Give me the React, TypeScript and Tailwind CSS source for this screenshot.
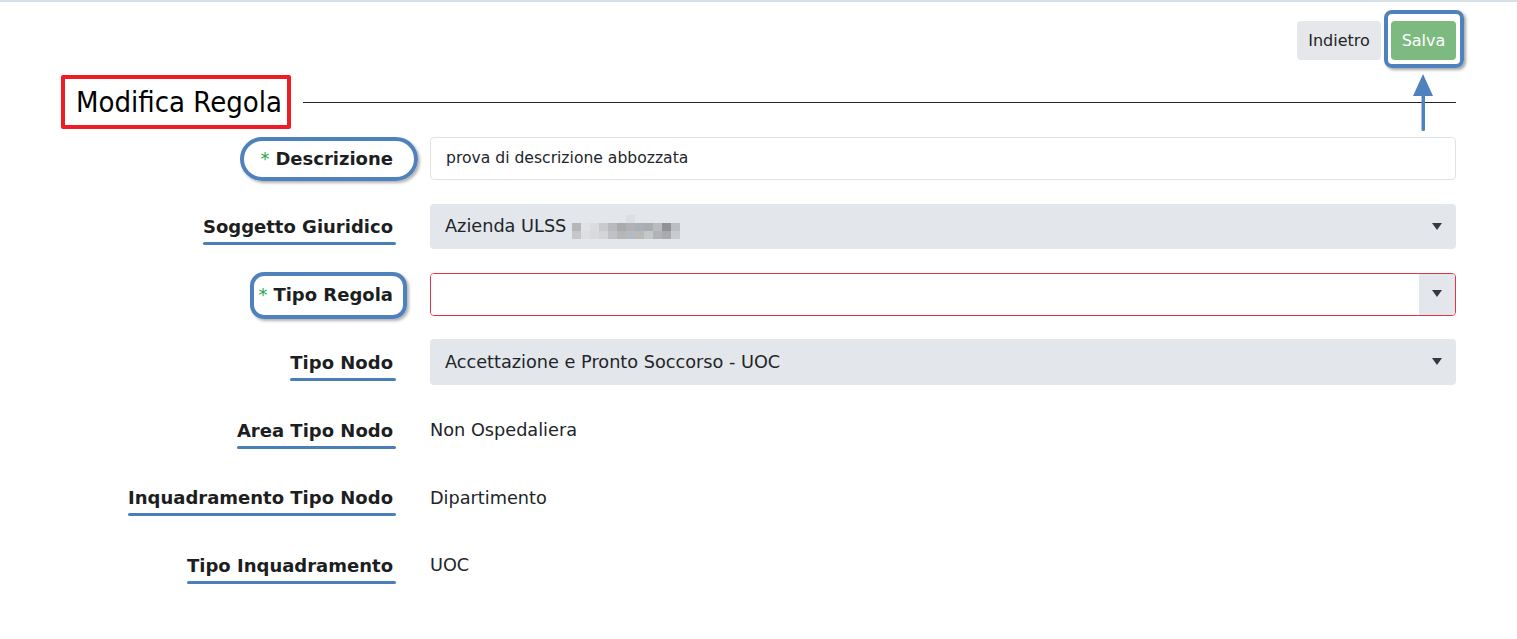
import React from "react";

const FONT = { fontFamily: '"DejaVu Sans", sans-serif' };
const TITLE_FONT = { fontFamily: '"DejaVu Sans Condensed", "DejaVu Sans", sans-serif' };

const blurCells = [
  ["bg-[#e4e6ea]", "bg-[#e4e6ea]", "bg-[#e4e6ea]", "bg-[#e4e6ea]", "bg-[#e4e6ea]", "bg-[#e4e6ea]", "bg-[#dcdee2]", "bg-[#e4e6ea]", "bg-[#e4e6ea]", "bg-[#e4e6ea]", "bg-[#e4e6ea]", "bg-[#e4e6ea]"],
  ["bg-[#b4b6ba]", "bg-[#e0e2e6]", "bg-[#dadce0]", "bg-[#c8cace]", "bg-[#b8babe]", "bg-[#a8aaae]", "bg-[#b0b2b6]", "bg-[#a9b0b9]", "bg-[#aaacb0]", "bg-[#b9bbbf]", "bg-[#8f9298]", "bg-[#bcbec2]"],
  ["bg-[#c4c6ca]", "bg-[#dcdee2]", "bg-[#d8dade]", "bg-[#d2d4d8]", "bg-[#bfc1c4]", "bg-[#b8b6b4]", "bg-[#b4bac2]", "bg-[#b8bab6]", "bg-[#c6c8c8]", "bg-[#b0b2b8]", "bg-[#a8aab0]", "bg-[#c8cace]"],
];

function Caret() {
  return (
    <svg width="10" height="8" viewBox="0 0 10 8" className="shrink-0">
      <path d="M0 0 L10 0 L5 7 Z" fill="#343a40" />
    </svg>
  );
}

function Underlined({ children }: { children: React.ReactNode }) {
  return (
    <span className="relative inline-block">
      {children}
      <span className="absolute left-[0px] right-[-3px] bottom-[-5px] h-[3px] rounded-full bg-[#4a7ebb]" />
    </span>
  );
}

function Req() {
  return <span className="text-[#28a745] font-normal mr-[6px]">*</span>;
}

function Row({ label, children }: { label: React.ReactNode; children: React.ReactNode }) {
  return (
    <div className="grid grid-cols-[332px_1fr] gap-[37px] items-center h-[67.8px]">
      <div className="text-right font-bold text-[18px] text-[#1c1e21]">{label}</div>
      <div>{children}</div>
    </div>
  );
}

export default function App() {
  return (
    <div className="min-h-[639px] bg-white border-t-2 border-[#d6e0e8]" style={FONT}>
      <div className="pl-[61px] pr-[61px]">
        <div className="flex justify-end items-start gap-[10px] pt-[19px]">
          <button className="h-[39px] w-[84px] rounded-[4px] bg-[#e5e7eb] text-[16px] text-[#212529]">Indietro</button>
          <div className="relative">
            <button className="h-[39px] w-[65px] rounded-[4px] bg-[#7dba7f] text-[16px] text-white">Salva</button>
            <span className="pointer-events-none absolute left-[-7px] right-[-8px] top-[-11px] bottom-[-8px] rounded-[8px] border-[4px] border-[#4f81bd] shadow-[2px_2px_3px_rgba(0,0,0,0.35)]" />
            <svg className="absolute left-[21px] top-[53px]" width="22" height="57" viewBox="0 0 22 57">
              <path d="M11 0 L21 22 L1 22 Z" fill="#4f81bd" />
              <rect x="9.5" y="20" width="3.5" height="37" rx="1.5" fill="#4f81bd" />
            </svg>
          </div>
        </div>

        <div className="flex items-center mt-[15px]">
          <div className="border-[4px] border-[#ee1c25] rounded-[2px] pl-[11px] pr-[5px] h-[54px] flex items-center">
            <h1 className="text-[29px] text-black leading-none" style={TITLE_FONT}>Modifica Regola</h1>
          </div>
          <div className="flex-1 h-px bg-[#222] ml-[12px]" />
        </div>

        <div className="mt-[-4px]">
          <Row
            label={
              <span className="relative inline-block">
                <Req />Descrizione
                <span className="absolute left-[-20px] right-[-25px] top-[-8px] bottom-[-9px] rounded-full border-[4px] border-[#4f81bd] shadow-[2px_2px_3px_rgba(0,0,0,0.3)]" />
              </span>
            }
          >
            <div className="h-[43px] border border-[#dee2e6] rounded-[4px] flex items-center px-[15px] text-[15.6px] text-[#212529] bg-white">
              prova di descrizione abbozzata
            </div>
          </Row>
          <Row label={<Underlined>Soggetto Giuridico</Underlined>}>
            <div className="h-[45px] rounded-[4px] bg-[#e3e6ea] flex items-center pl-[15px] pr-[14px] text-[17.7px] text-[#212529]">
              <span>Azienda ULSS</span>
              <div className="ml-[6px] flex flex-col">
                {blurCells.map((r, i) => (
                  <div key={i} className="flex">
                    {r.map((c, j) => (
                      <div key={j} className={`w-[9px] h-[8px] ${c}`} />
                    ))}
                  </div>
                ))}
              </div>
              <div className="flex-1" />
              <Caret />
            </div>
          </Row>
          <Row
            label={
              <span className="relative inline-block">
                <Req />Tipo Regola
                <span className="absolute left-[-8px] right-[-14px] top-[-9px] bottom-[-11px] rounded-[14px] border-[4px] border-[#4f81bd] shadow-[2px_2px_3px_rgba(0,0,0,0.3)]" />
              </span>
            }
          >
            <div className="h-[43px] rounded-[4px] border border-[#dc3545] flex overflow-hidden">
              <div className="flex-1 bg-white" />
              <div className="w-[36px] bg-[#e3e6ea] flex items-center justify-center">
                <Caret />
              </div>
            </div>
          </Row>
          <Row label={<Underlined>Tipo Nodo</Underlined>}>
            <div className="h-[46px] rounded-[4px] bg-[#e3e6ea] flex items-center pl-[15px] pr-[14px] text-[17.7px] text-[#212529]">
              <span>Accettazione e Pronto Soccorso - UOC</span>
              <div className="flex-1" />
              <Caret />
            </div>
          </Row>
          <Row label={<Underlined>Area Tipo Nodo</Underlined>}>
            <div className="text-[17.7px] text-[#212529]">Non Ospedaliera</div>
          </Row>
          <Row label={<Underlined>Inquadramento Tipo Nodo</Underlined>}>
            <div className="text-[17.7px] text-[#212529]">Dipartimento</div>
          </Row>
          <Row label={<Underlined>Tipo Inquadramento</Underlined>}>
            <div className="text-[17.7px] text-[#212529]">UOC</div>
          </Row>
        </div>
      </div>
    </div>
  );
}
